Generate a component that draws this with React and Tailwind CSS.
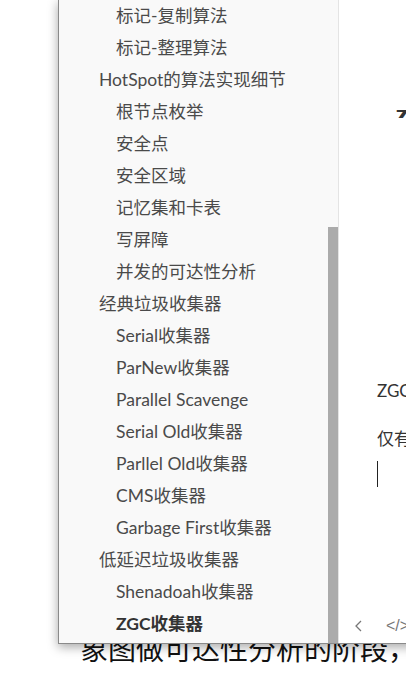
import React from "react";

const items = [
  { t: "标记-复制算法", l: 2 },
  { t: "标记-整理算法", l: 2 },
  { t: "HotSpot的算法实现细节", l: 1 },
  { t: "根节点枚举", l: 2 },
  { t: "安全点", l: 2 },
  { t: "安全区域", l: 2 },
  { t: "记忆集和卡表", l: 2 },
  { t: "写屏障", l: 2 },
  { t: "并发的可达性分析", l: 2 },
  { t: "经典垃圾收集器", l: 1 },
  { t: "Serial收集器", l: 2 },
  { t: "ParNew收集器", l: 2 },
  { t: "Parallel Scavenge", l: 2 },
  { t: "Serial Old收集器", l: 2 },
  { t: "Parllel Old收集器", l: 2 },
  { t: "CMS收集器", l: 2 },
  { t: "Garbage First收集器", l: 2 },
  { t: "低延迟垃圾收集器", l: 1 },
  { t: "Shenadoah收集器", l: 2 },
  { t: "ZGC收集器", l: 2, b: true },
];

export default function App() {
  return (
    <div
      className="relative w-[406px] h-[684px] overflow-hidden bg-white"
      style={{ fontFamily: 'Lato, "Noto Sans CJK SC", sans-serif' }}
    >
      {/* background document */}
      <div className="pt-[631px] pl-[80px] whitespace-nowrap text-[28px] leading-[36px] text-[#111]">
        象图做可达性分析的阶段，
      </div>

      {/* foreground window */}
      <div className="absolute left-[58px] top-0 w-[360px] h-[644px] flex bg-white border-l border-b border-[#8a8a8a] shadow-[0_3px_10px_rgba(0,0,0,0.35)]">
        {/* outline sidebar */}
        <div className="w-[280px] shrink-0 flex bg-[#f9f9f9] border-r border-[#e4e4e4]">
          <div className="flex-1 flex flex-col">
            {items.map((it, i) => (
              <div
                key={i}
                className={
                  "h-[32px] flex items-center whitespace-nowrap text-[17.5px] " +
                  (it.l === 1 ? "pl-[40px] " : "pl-[57px] ") +
                  (it.b ? "font-bold text-[#333]" : "text-[#4a4a4a]")
                }
              >
                {it.t}
              </div>
            ))}
          </div>
          <div className="w-[10px] flex flex-col pt-[227px]">
            <div className="flex-1 bg-[#ababab]" />
          </div>
        </div>

        {/* editor content */}
        <div className="flex-1 min-w-0 flex flex-col text-[#333]">
          <div className="h-[110px]" />
          <div className="h-[8px] overflow-hidden pl-[57px]">
            <div
              className="text-[20px] leading-none font-black text-[#333] -mt-[4px]"
              style={{ fontFamily: '"Open Sans", sans-serif' }}
            >
              Z
            </div>
          </div>
          <div className="h-[261px]" />
          <div className="pl-[38px] whitespace-nowrap text-[17px] leading-[24px]">
            ZGC收集器是一款基于Region内存布局的
          </div>
          <div className="h-[24px]" />
          <div className="pl-[38px] whitespace-nowrap text-[17px] leading-[24px]">
            仅有临界区内的短暂停顿
          </div>
          <div className="h-[10px]" />
          <div className="pl-[38px]">
            <div className="w-[1px] h-[26px] bg-[#222]" />
          </div>
          <div className="flex-1" />
          <div className="h-[34px] flex items-center pl-[14px] gap-[21px] text-[#777]">
            <svg width="12" height="14" viewBox="0 0 12 14" fill="none" stroke="#777" strokeWidth="1.3">
              <path d="M8 2 L3 7 L8 12" />
            </svg>
            <span className="text-[16px] whitespace-nowrap leading-none" style={{ fontFamily: '"Liberation Sans", sans-serif' }}>
              &lt;/&gt;
            </span>
          </div>
        </div>
      </div>
    </div>
  );
}
